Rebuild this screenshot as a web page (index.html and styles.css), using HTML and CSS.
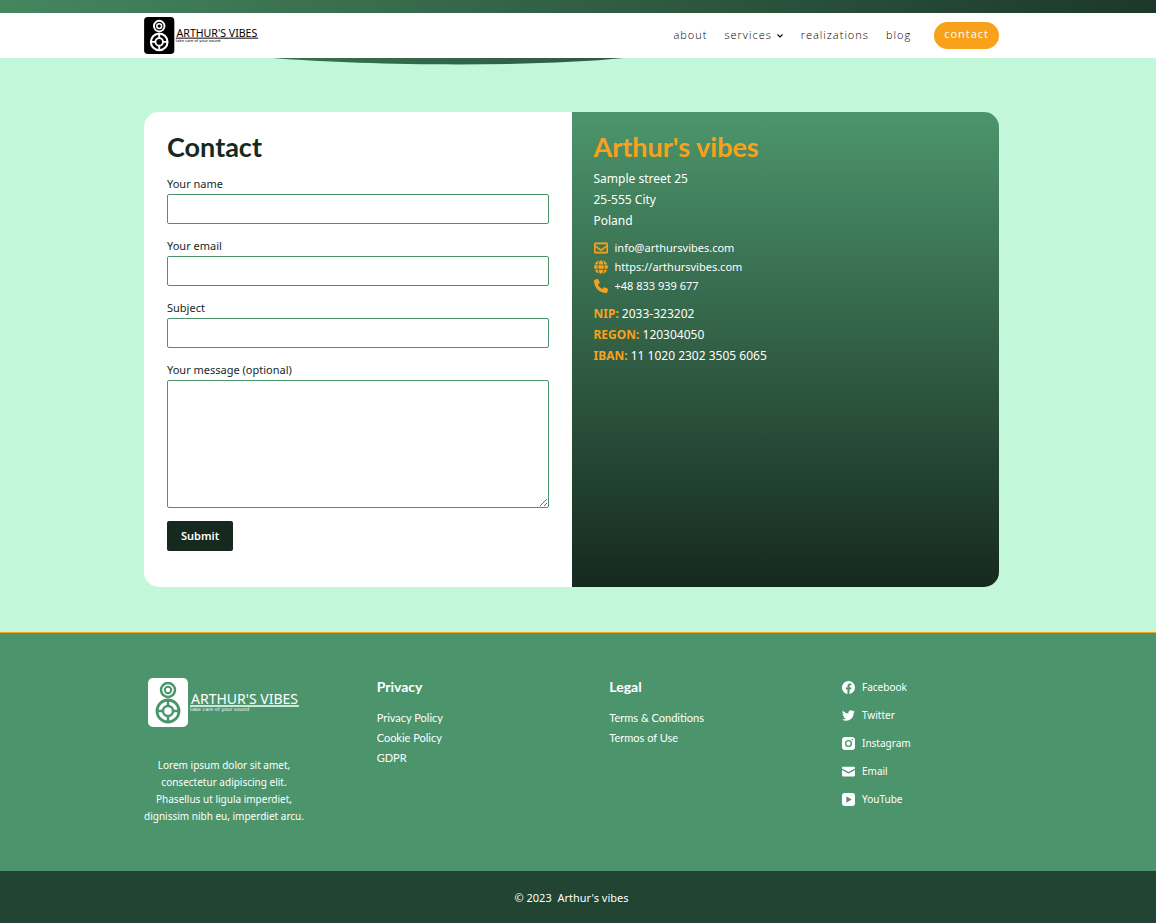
FILE: index.html
```html
<!DOCTYPE html>
<html lang="en">
<head>
<meta charset="utf-8">
<meta name="viewport" content="width=device-width, initial-scale=1">
<title>Contact – Arthur's vibes</title>
<link rel="stylesheet" href="styles.css">
</head>
<body>
<svg class="sprite" aria-hidden="true">
  <symbol id="logo" viewBox="0 0 152 49">
    <rect width="40" height="49" rx="5" fill="currentColor"/>
    <g class="logo-cut" fill="none">
      <circle cx="20" cy="12" r="7" stroke-width="2.5"/>
      <circle cx="20" cy="12" r="3.2" stroke-width="2"/>
      <circle cx="20" cy="33" r="11" stroke-width="2.8"/>
      <circle cx="20" cy="33" r="5" stroke-width="2.5"/>
      <path d="M20 22v6M20 38v6M9 33h6M25 33h6" stroke-width="2.5"/>
    </g>
    <text class="logo-name" x="43" y="26">ARTHUR'S VIBES</text>
    <path d="M42 28h109" stroke="currentColor" stroke-width="1.3"/>
    <text class="logo-tag" x="42" y="33">take care of your sound</text>
  </symbol>
</svg>

<div class="hero"></div>
<header class="header">
  <div class="container header-row">
    <a class="header-logo" href="#" aria-label="Arthur's vibes home"><svg class="logo-small"><use href="#logo"/></svg></a>
    <nav class="nav" aria-label="Main">
      <a href="#">about</a>
      <a href="#">services <svg class="chevron" viewBox="0 0 8 6" aria-hidden="true"><path d="M1.500 1.500 4 4l2.500-2.500"/></svg></a>
      <a href="#">realizations</a>
      <a href="#">blog</a>
      <a class="pill" href="#">contact</a>
    </nav>
  </div>
  <svg class="curve" viewBox="0 0 350 7" preserveAspectRatio="none" aria-hidden="true">
    <defs><linearGradient id="curve-fill"><stop stop-color="#38714f"/><stop offset="1" stop-color="#2d5a41"/></linearGradient></defs>
    <path d="M0 0C100 8 260 9 350 0Z" fill="url(#curve-fill)"/>
  </svg>
</header>

<main class="main">
  <div class="container card">
    <form class="form">
      <h1 class="title">Contact</h1>
      <div class="field"><label for="name">Your name</label><input id="name" type="text"></div>
      <div class="field"><label for="email">Your email</label><input id="email" type="email"></div>
      <div class="field"><label for="subject">Subject</label><input id="subject" type="text"></div>
      <div class="field"><label for="message">Your message (optional)</label><textarea id="message"></textarea></div>
      <button class="submit" type="submit">Submit</button>
    </form>
    <section class="info">
      <h2 class="title title-accent">Arthur's vibes</h2>
      <address class="lines">Sample street 25<br>25-555 City<br>Poland</address>
      <ul class="reach">
        <li><svg viewBox="0 0 512 512" aria-hidden="true"><path stroke="#f9a11b" stroke-width="20" d="M464 64H48C21.500 64 0 85.500 0 112v288c0 26.500 21.500 48 48 48h416c26.500 0 48-21.500 48-48V112c0-26.500-21.500-48-48-48zm0 48v40.800c-22.400 18.300-58.200 46.700-134.600 106.500-16.800 13.200-50.200 45.100-73.400 44.700-23.200.4-56.600-31.500-73.400-44.700C106.200 199.500 70.400 171.100 48 152.800V112h416zM48 400V214.400c22.900 18.300 55.400 43.900 104.900 82.600 21.900 17.200 60.100 55.200 103.100 55 42.700.2 80.500-37.200 103.100-54.900 49.500-38.800 82-64.400 104.900-82.700V400H48z"/></svg><a href="#">info@arthursvibes.com</a></li>
        <li><svg viewBox="0 0 496 512" aria-hidden="true"><path d="M336.500 160C322 70.700 287.800 8 248 8s-74 62.700-88.500 152h177zM152 256c0 22.200 1.200 43.500 3.300 64h185.300c2.100-20.500 3.300-41.800 3.300-64s-1.200-43.500-3.300-64H155.300c-2.100 20.500-3.300 41.800-3.300 64zm324.700-96c-28.600-67.900-86.500-120.400-158-141.600 24.400 33.800 41.200 84.700 50 141.600h108zM177.200 18.400C105.800 39.600 47.800 92.100 19.300 160h108c8.700-56.900 25.500-107.800 49.900-141.600zM487.400 192H372.700c2.100 21 3.300 42.500 3.300 64s-1.200 43-3.300 64h114.600c5.500-20.500 8.600-41.800 8.600-64s-3.100-43.500-8.500-64zM120 256c0-21.500 1.200-43 3.300-64H8.600C3.200 212.500 0 233.800 0 256s3.200 43.500 8.600 64h114.600c-2-21-3.200-42.500-3.200-64zm39.500 96c14.500 89.300 48.700 152 88.500 152s74-62.700 88.500-152h-177zm159.300 141.600c71.400-21.200 129.400-73.700 158-141.600h-108c-8.800 56.900-25.600 107.800-50 141.600zM19.300 352c28.600 67.900 86.500 120.400 158 141.600-24.400-33.800-41.200-84.700-50-141.600h-108z"/></svg><a href="#">https://arthursvibes.com</a></li>
        <li><svg viewBox="0 0 512 512" aria-hidden="true"><path d="M164.900 24.600c-7.700-18.600-28-28.500-47.400-23.200l-88 24C12.100 30.200 0 46 0 64c0 247.400 200.600 448 448 448 18 0 33.800-12.100 38.600-29.500l24-88c5.300-19.400-4.600-39.700-23.200-47.400l-96-40c-16.300-6.800-35.200-2.100-46.300 11.600L304.700 368C234.300 334.700 177.300 277.700 144 207.300l49.300-40.300c13.700-11.200 18.400-30 11.600-46.300z"/></svg><a href="#">+48 833 939 677</a></li>
      </ul>
      <p class="lines"><strong>NIP:</strong> 2033-323202<br><strong>REGON:</strong> 120304050<br><strong>IBAN:</strong> 11 1020 2302 3505 6065</p>
    </section>
  </div>
</main>

<footer class="footer">
  <div class="container footer-grid">
    <div class="about">
      <svg class="logo-large" role="img" aria-label="Arthur's vibes"><use href="#logo"/></svg>
      <p>Lorem ipsum dolor sit amet, consectetur adipiscing elit. Phasellus ut ligula imperdiet, dignissim nibh eu, imperdiet arcu.</p>
    </div>
    <nav class="links" aria-label="Privacy">
      <h3>Privacy</h3>
      <a href="#">Privacy Policy</a><a href="#">Cookie Policy</a><a href="#">GDPR</a>
    </nav>
    <nav class="links" aria-label="Legal">
      <h3>Legal</h3>
      <a href="#">Terms &amp; Conditions</a><a href="#">Termos of Use</a>
    </nav>
    <ul class="social">
      <li><a href="#"><svg viewBox="0 0 24 24" aria-hidden="true"><path d="M24 12a12 12 0 1 0-13.900 11.900v-8.400H7V12h3.100V9.400c0-3 1.800-4.700 4.500-4.700 1.300 0 2.700.2 2.700.2v3h-1.500c-1.500 0-2 .9-2 1.900V12h3.400l-.5 3.500h-2.900v8.400A12 12 0 0 0 24 12z"/></svg>Facebook</a></li>
      <li><a href="#"><svg viewBox="0 0 24 24" aria-hidden="true"><path d="M24 4.600a10 10 0 0 1-2.800.8 4.900 4.900 0 0 0 2.100-2.700c-1 .6-2 1-3.100 1.200a4.900 4.900 0 0 0-8.400 4.500A14 14 0 0 1 1.700 3.100a4.900 4.900 0 0 0 1.500 6.600 4.900 4.900 0 0 1-2.200-.6v.1a4.900 4.900 0 0 0 3.900 4.800 5 5 0 0 1-2.200.1 4.900 4.900 0 0 0 4.600 3.400A9.900 9.900 0 0 1 0 19.500a14 14 0 0 0 21.500-12.400A10 10 0 0 0 24 4.600z"/></svg>Twitter</a></li>
      <li><a href="#"><svg viewBox="0 0 24 24" aria-hidden="true"><path fill-rule="evenodd" d="M6 0h12a6 6 0 0 1 6 6v12a6 6 0 0 1-6 6H6a6 6 0 0 1-6-6V6a6 6 0 0 1 6-6zm6 5.500a6.500 6.500 0 1 0 0 13 6.500 6.500 0 0 0 0-13zm0 2.500a4 4 0 1 1 0 8 4 4 0 0 1 0-8zm7-4.500a1.500 1.500 0 1 0 0 3 1.500 1.500 0 0 0 0-3z"/></svg>Instagram</a></li>
      <li><a href="#"><svg viewBox="0 0 24 24" aria-hidden="true"><path d="M2 3h20a2 2 0 0 1 2 2v1.500l-12 6.500L0 6.500V5a2 2 0 0 1 2-2zM0 9l12 6.500L24 9v10a2 2 0 0 1-2 2H2a2 2 0 0 1-2-2z"/></svg>Email</a></li>
      <li><a href="#"><svg viewBox="0 0 24 24" aria-hidden="true"><path fill-rule="evenodd" d="M5 0h14a5 5 0 0 1 5 5v14a5 5 0 0 1-5 5H5a5 5 0 0 1-5-5V5a5 5 0 0 1 5-5zm3 6v12l10-6z"/></svg>YouTube</a></li>
    </ul>
  </div>
</footer>
<div class="bottom"><p class="container">© 2023&nbsp; Arthur's vibes</p></div>
</body>
</html>
```
FILE: styles.css
```css
:root {
  --green: #4c956c;
  --dark: #16291e;
  --accent: #f9a11b;
  --mint: #c3f7da;
  --gutter: 13px;
}
* { box-sizing: border-box; }
body {
  margin: 0;
  min-height: 100vh;
  display: flex;
  flex-direction: column;
  background: var(--mint);
  color: var(--dark);
  font: 12px/21px "Noto Sans", "Open Sans", sans-serif;
}
h1, h2, h3, p, ul { margin: 0; padding: 0; }
ul { list-style: none; }
a { color: inherit; text-decoration: none; }
.sprite { display: none; }
.header, .main, .footer, .bottom { padding-right: var(--gutter); }
.container { width: 75%; max-width: 855px; margin: 0 auto; }

.hero { height: 13px; background: linear-gradient(90deg, #45865f, #1c3829); }
.header { position: relative; background: #fff; }
.header-row { display: flex; align-items: center; justify-content: space-between; height: 45px; }
.header-logo { display: block; height: 37px; color: #000; --cut: #fff; }
.logo-small { width: 115px; height: 37px; }
.logo-large { width: 152px; height: 49px; color: #fff; --cut: var(--green); }
.logo-cut { stroke: var(--cut); }
.logo-name { font: 14px/18px "Noto Sans", sans-serif; fill: currentColor; }
.logo-tag { font: 5px/6px "DejaVu Sans", sans-serif; fill: currentColor; }
.nav {
  display: flex;
  align-items: center;
  gap: 17px;
  color: #000;
  font: 300 11px/19px "Open Sans", sans-serif;
  letter-spacing: 1px;
}
.nav a { padding-bottom: 2px; }
.nav .pill {
  margin-left: 6px;
  padding: 2px 10px 6px;
  border-radius: 14px;
  background: var(--accent);
  color: #fff;
  font-weight: 500;
}
.chevron { width: 8px; height: 6px; fill: none; stroke: currentColor; stroke-width: 1.2; }
.curve { position: absolute; top: 100%; left: 23.5%; width: 30.5%; height: 7px; }

.main { flex: 1; padding-top: 54px; padding-bottom: 45px; }
.card { display: grid; grid-template-columns: 1fr 1fr; min-height: 475px; border-radius: 15px; overflow: hidden; }
.form { padding: 20px 23px 36px; background: #fff; font-size: 11px; }
.title { font: 700 27px/30px Lato, "Open Sans", sans-serif; }
.title-accent { color: var(--accent); }
.form .title { margin-bottom: 12px; }
.field { display: flex; flex-direction: column; margin-bottom: 13px; }
.field label { padding-bottom: 1px; line-height: 19px; }
.field input, .field textarea {
  display: block;
  width: 100%;
  height: 30px;
  padding: 4px 8px;
  border: 1px solid var(--green);
  border-radius: 2px;
  background: #fff;
  font: inherit;
}
.field input { margin-bottom: -1px; }
.field textarea { height: 128px; resize: vertical; }
.submit {
  height: 30px;
  padding: 0 14px 2px;
  border: 0;
  border-radius: 2px;
  background: var(--dark);
  color: #fff;
  font: 600 11px "Noto Sans", sans-serif;
}
.info { padding: 20px 22px; background: linear-gradient(var(--green), var(--dark)); color: #fff; }
.lines { font-style: normal; }
.info .title { margin-bottom: 6px; }
.reach { margin: 7px 0 8px; font-size: 11px; line-height: 19px; }
.reach li { display: flex; align-items: center; gap: 7px; }
.reach svg { width: 14px; height: 14px; fill: var(--accent); }
.lines strong { color: var(--accent); }

.footer { flex: none; background: var(--green); border-top: 1px solid var(--accent); color: #fff; font-size: 10px; }
.footer-grid {
  display: grid;
  grid-template-columns: repeat(3, 1fr) 157px;
  padding: 45px 0;
  min-height: 238px;
}
.about {
  display: flex;
  flex-direction: column;
  align-items: center;
  gap: 30px;
  width: 160px;
  text-align: center;
  line-height: 17px;
}
.links { display: flex; flex-direction: column; font: 11px/20px Lato, sans-serif; }
.links h3 { margin-bottom: 12px; font: 700 14px/18px Lato, sans-serif; }
.social { display: grid; align-content: start; gap: 9px; line-height: 19px; }
.social a { display: flex; align-items: center; gap: 7px; }
.social svg { width: 13px; height: 13px; fill: currentColor; }
.bottom { padding-top: 16px; padding-bottom: 15px; background: #224433; color: #fff; text-align: center; font-size: 11px; }
```
